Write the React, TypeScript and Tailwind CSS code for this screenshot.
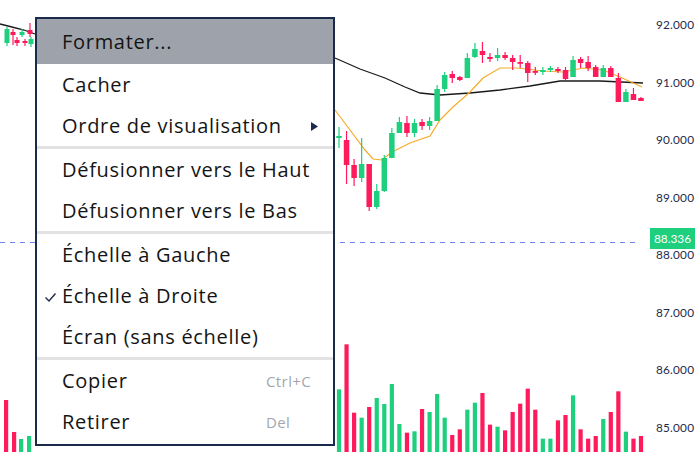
import React from 'react';

// [bodyTop, bodyBottom, wickTop, wickBottom, up]
const candles: [number, number, number, number, number][] = [
  [136, 138, 127, 148, 1], [140, 165, 131, 184, 0], [165, 178, 159, 186, 0], [164, 178, 138, 182, 1],
  [164, 207, 164, 211, 0], [191, 207, 184, 209, 1], [158, 191, 155, 192, 1], [133, 158, 128, 158, 1],
  [122, 133, 117, 133, 1], [123, 133, 116, 137, 0], [123, 133, 119, 137, 1], [122, 126, 119, 130, 0],
  [121, 126, 117, 130, 1], [89, 121, 85, 121, 1], [75, 89, 72, 92, 1], [74, 78, 71, 83, 0],
  [77, 80, 76, 81, 0], [58, 78, 53, 78, 1], [49, 57, 43, 58, 1], [51, 55, 42, 63, 0],
  [57, 59, 53, 62, 0], [55, 58, 48, 61, 1], [55, 58, 52, 60, 0], [58, 62, 55, 70, 0],
  [62, 63, 55, 68, 0], [63, 73, 61, 82, 0], [71, 72, 67, 75, 0], [70, 72, 67, 75, 1],
  [68, 70, 66, 72, 1], [69, 71, 67, 73, 0], [70, 79, 67, 80, 0], [60, 77, 56, 77, 1],
  [59, 63, 57, 68, 0], [62, 68, 56, 71, 0], [67, 77, 65, 77, 0], [68, 77, 65, 77, 1],
  [68, 77, 66, 77, 0], [78, 102, 73, 102, 0], [92, 102, 89, 102, 1], [94, 100, 88, 100, 0],
  [98, 101, 97, 101, 0],
];

const volumes = [
  478, 343, 548, 563, 531, 504, 522, 462, 582, 608, 604, 537, 546, 492, 563, 615, 598, 539, 518, 489, 584,
  590, 601, 546, 521, 476, 539, 626, 626, 571, 555, 496, 598, 626, 618, 567, 546, 484, 605, 626, 618,
];

const leftCandles: [number, number, number, number, number, number][] = [
  [7, 29, 43, 27, 46, 1], [13, 32, 35, 29, 45, 0], [17, 40, 43, 37, 46, 0], [22, 32, 35, 29, 37, 1],
  [25, 41, 43, 39, 46, 0], [30, 30, 34, 23, 37, 0], [31, 39, 44, 37, 47, 1],
];

const leftVolumes: [number, number, number][] = [
  [6, 400, 0], [14, 432, 0], [21, 439, 1], [29, 436, 1],
];

const axis = ['92.000', '91.000', '90.000', '89.000', '88.000', '87.000', '86.000', '85.000'];

const GREEN = '#1ecf7e';
const RED = '#ff1a5c';
const BASE = 452;

const Chart = () => (
  <svg width="700" height="466" viewBox="0 0 700 466" className="absolute inset-0">
    <line x1="0" y1="242.5" x2="640" y2="242.5" stroke="#6f86ee" strokeWidth="1.2" strokeDasharray="5 5" />

    {/* moving averages */}
    <polyline
      points="0,24 12,27 24,30 35,34"
      fill="none" stroke="#1a1a1a" strokeWidth="1.3"
    />
    <polyline
      points="335,58 360,69 385,78 405,87 420,93 440,95 470,93 500,90 530,86 560,81 600,81 643,83"
      fill="none" stroke="#1a1a1a" strokeWidth="1.3"
    />
    <polyline
      points="335,110 350,130 365,150 373,159 382,160 392,152 410,143 430,136 440,120 453,107 470,92 483,78 500,68 517,68 543,71 563,72 583,68 603,70 620,77 642,87"
      fill="none" stroke="#f5ac2a" strokeWidth="1.2"
    />

    {leftCandles.map(([x, bt, bb, wt, wb, up], i) => (
      <g key={'lc' + i} fill={up ? GREEN : RED} stroke={up ? GREEN : RED}>
        <line x1={x} x2={x} y1={wt} y2={wb} strokeWidth="1.2" />
        <rect x={x - 2.5} y={bt} width="5" height={Math.max(bb - bt, 1.5)} stroke="none" />
      </g>
    ))}

    {candles.map(([bt, bb, wt, wb, up], i) => {
      const x = 339 + i * 7.55;
      const c = up ? GREEN : RED;
      return (
        <g key={'c' + i}>
          <line x1={x} x2={x} y1={wt} y2={wb} stroke={c} strokeWidth="1.2" />
          <rect x={x - 2.75} y={bt} width="5.5" height={Math.max(bb - bt, 1.8)} fill={c} />
        </g>
      );
    })}

    {leftVolumes.map(([x, top, up], i) => (
      <rect key={'lv' + i} x={x - 2} y={top} width="4.2" height={BASE - top} fill={up ? GREEN : RED} />
    ))}

    {volumes.map((v, i) => {
      const x = 339 + i * 7.55;
      const top = 230 + v / 3;
      return (
        <rect key={'v' + i} x={x - 2.1} y={top} width="4.2" height={BASE - top} fill={candles[i][4] ? GREEN : RED} />
      );
    })}

    {axis.map((t, i) => (
      <text
        key={t}
        x="656"
        y={25 + i * 57.5 + 4}
        fontFamily="Lato, 'Noto Sans', sans-serif"
        fontSize="11.8"
        fill="#1d2a4b"
        letterSpacing="0.2"
      >
        {t}
      </text>
    ))}

    <rect x="650" y="228" width="45" height="21" fill={GREEN} />
    <text
      x="672.5"
      y="243"
      textAnchor="middle"
      fontFamily="Lato, 'Noto Sans', sans-serif"
      fontSize="11.8"
      fill="#ffffff"
    >
      88.336
    </text>
  </svg>
);

type Item = {
  label: string;
  shortcut?: string;
  sub?: boolean;
  checked?: boolean;
  active?: boolean;
  first?: boolean;
};

const groups: Item[][] = [
  [
    { label: 'Formater...', active: true, first: true },
    { label: 'Cacher' },
    { label: 'Ordre de visualisation', sub: true },
  ],
  [{ label: 'Défusionner vers le Haut' }, { label: 'Défusionner vers le Bas' }],
  [
    { label: 'Échelle à Gauche' },
    { label: 'Échelle à Droite', checked: true },
    { label: 'Écran (sans échelle)' },
  ],
  [
    { label: 'Copier', shortcut: 'Ctrl+C' },
    { label: 'Retirer', shortcut: 'Del' },
  ],
];

const MenuRow = ({ item }: { item: Item }) => (
  <div
    className={
      'relative flex items-center pl-[25px] pt-[1px] text-[20px] text-[#141414] ' +
      (item.first ? 'h-[45px] ' : 'h-[41px] ') +
      (item.active ? 'bg-[#9ea3ab]' : 'bg-white')
    }
  >
    {item.checked && (
      <svg className="absolute left-[7px] top-[17px]" width="13" height="11" viewBox="0 0 13 11">
        <path d="M1.5 5.5 L5 9 L11.5 1.5" fill="none" stroke="#1d2a4b" strokeWidth="1.4" />
      </svg>
    )}
    <span className="flex-1 tracking-[0.7px]">{item.label}</span>
    {item.shortcut && (
      <span className="w-[67px] text-[15px] tracking-[0.4px] text-[#a3a7ad]">{item.shortcut}</span>
    )}
    {item.sub && (
      <svg className="absolute right-[15px] top-[17px]" width="7" height="9" viewBox="0 0 7 9">
        <path d="M0 0 L7 4.5 L0 9 Z" fill="#1d2a4b" />
      </svg>
    )}
  </div>
);

const ContextMenu = () => (
  <div
    className="absolute left-[35px] top-[17px] w-[300px] border-2 border-[#1b2a4a] bg-white pb-[2px]"
    style={{ fontFamily: "'Open Sans', Lato, sans-serif" }}
  >
    {groups.map((g, gi) => (
      <div key={gi}>
        {gi > 0 && <div className="h-[3px] bg-[#e2e2e2]" />}
        {g.map((item) => (
          <MenuRow key={item.label} item={item} />
        ))}
      </div>
    ))}
  </div>
);

export default function App() {
  return (
    <div
      className="relative w-[700px] h-[466px] overflow-hidden bg-white"
      style={{ fontFamily: "Lato, 'Noto Sans', sans-serif" }}
    >
      <Chart />
      <ContextMenu />
    </div>
  );
}
